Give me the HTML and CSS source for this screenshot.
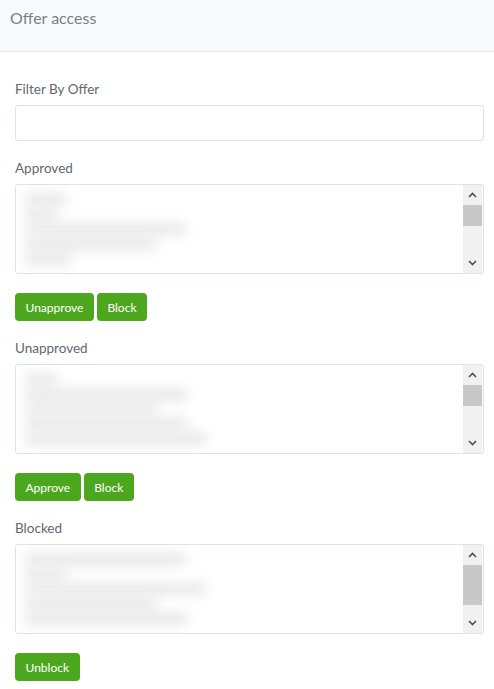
FILE: index.html
```html
<!DOCTYPE html>
<html>
<head>
<meta charset="utf-8">
<link rel="stylesheet" href="styles.css">
</head>
<body>
<div class="header"><span class="title">Offer access</span></div>
<div class="content">
  <label class="label label-first">Filter By Offer</label>
  <input class="input" type="text">

  <label class="label">Approved</label>
  <div class="listbox">
    <div class="items">
      <div class="blur b1"></div>
      <div class="blur b2"></div>
      <div class="blur b3"></div>
      <div class="blur b4"></div>
      <div class="blur b5"></div>
    </div>
    <div class="scrollbar">
      <div class="arrow up"><svg width="9" height="6" viewBox="0 0 9 6"><path d="M1 5 L4.5 1.5 L8 5" fill="none" stroke="#505050" stroke-width="1.6"/></svg></div>
      <div class="track"><div class="thumb t-small"></div></div>
      <div class="arrow down"><svg width="9" height="6" viewBox="0 0 9 6"><path d="M1 1 L4.5 4.5 L8 1" fill="none" stroke="#505050" stroke-width="1.6"/></svg></div>
    </div>
  </div>
  <div class="buttons">
    <button class="btn">Unapprove</button>
    <button class="btn">Block</button>
  </div>

  <label class="label">Unapproved</label>
  <div class="listbox">
    <div class="items">
      <div class="blur b2"></div>
      <div class="blur b3"></div>
      <div class="blur b4"></div>
      <div class="blur b3"></div>
      <div class="blur b6"></div>
    </div>
    <div class="scrollbar">
      <div class="arrow up"><svg width="9" height="6" viewBox="0 0 9 6"><path d="M1 5 L4.5 1.5 L8 5" fill="none" stroke="#505050" stroke-width="1.6"/></svg></div>
      <div class="track"><div class="thumb t-small"></div></div>
      <div class="arrow down"><svg width="9" height="6" viewBox="0 0 9 6"><path d="M1 1 L4.5 4.5 L8 1" fill="none" stroke="#505050" stroke-width="1.6"/></svg></div>
    </div>
  </div>
  <div class="buttons">
    <button class="btn">Approve</button>
    <button class="btn">Block</button>
  </div>

  <label class="label">Blocked</label>
  <div class="listbox">
    <div class="items">
      <div class="blur b3"></div>
      <div class="blur b1"></div>
      <div class="blur b6"></div>
      <div class="blur b4"></div>
      <div class="blur b3"></div>
    </div>
    <div class="scrollbar">
      <div class="arrow up"><svg width="9" height="6" viewBox="0 0 9 6"><path d="M1 5 L4.5 1.5 L8 5" fill="none" stroke="#505050" stroke-width="1.6"/></svg></div>
      <div class="track"><div class="thumb t-large"></div></div>
      <div class="arrow down"><svg width="9" height="6" viewBox="0 0 9 6"><path d="M1 1 L4.5 4.5 L8 1" fill="none" stroke="#505050" stroke-width="1.6"/></svg></div>
    </div>
  </div>
  <div class="buttons">
    <button class="btn">Unblock</button>
  </div>
</div>
</body>
</html>
```
FILE: styles.css
```css
* { box-sizing: border-box; }
html, body { margin: 0; padding: 0; background: #fff; }
body {
  font-family: Lato, "Open Sans", sans-serif;
  width: 494px;
  overflow: hidden;
}
.header {
  height: 52px;
  background: #f8fbfe;
  border-bottom: 1px solid #e2e6ea;
  padding: 8px 10px 0;
}
.title {
  font-size: 16px;
  line-height: 20px;
  color: #7b7f84;
}
.content {
  padding: 28px 10px 0 15px;
}
.label {
  display: block;
  font-size: 13.5px;
  line-height: 18px;
  color: #626870;
  margin: 18px 0 7px;
}
.label-first { margin-top: 0; }
.input {
  display: block;
  width: 469px;
  height: 36px;
  border: 1px solid #dde3ea;
  border-radius: 3px;
  margin: 0;
  padding: 0 8px;
  font-family: inherit;
}
.listbox {
  display: flex;
  width: 469px;
  height: 90px;
  border: 1px solid #dde3ea;
  border-radius: 3px;
  overflow: hidden;
}
.items {
  flex: 1;
  padding: 8px 10px;
  display: flex;
  flex-direction: column;
  gap: 2px;
  overflow: hidden;
}
.blur {
  height: 15px;
  background: #e8e8e8;
  filter: blur(6px);
}
.b1 { width: 40px; }
.b2 { width: 30px; }
.b3 { width: 160px; }
.b4 { width: 130px; }
.b5 { width: 45px; }
.b6 { width: 180px; }
.scrollbar {
  width: 19px;
  margin-right: 1px;
  background: #f1f1f1;
  display: flex;
  flex-direction: column;
}
.arrow {
  height: 20px;
  display: flex;
  align-items: center;
  justify-content: center;
}
.track { flex: 1; }
.thumb { background: #c8c8c8; }
.t-small { height: 21px; }
.t-large { height: 40px; }
.buttons {
  display: flex;
  gap: 3px;
  margin-top: 19px;
}
.btn {
  height: 28px;
  padding: 0 10.5px;
  border: none;
  border-radius: 4px;
  background: #4ca71e;
  color: #fff;
  font-family: inherit;
  font-size: 12px;
}
```
